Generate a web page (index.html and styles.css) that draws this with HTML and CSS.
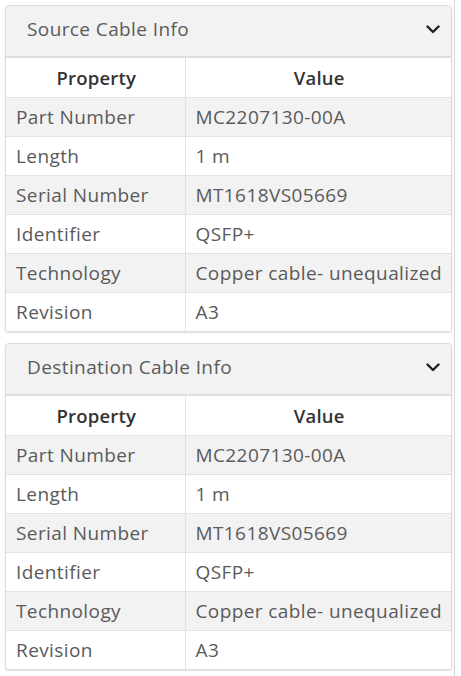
FILE: index.html
```html
<!DOCTYPE html>
<html>
<head>
<meta charset="utf-8">
<link rel="stylesheet" href="styles.css">
</head>
<body>
<div class="wrap">
  <section class="card">
    <div class="card-head">
      <span class="title">Source Cable Info</span>
      <svg class="chev" width="14" height="9" viewBox="0 0 14 9"><path d="M1.5 1.5 L7 7 L12.5 1.5" fill="none" stroke="#1f1f1f" stroke-width="2.4" stroke-linecap="round" stroke-linejoin="round"/></svg>
    </div>
    <table class="info">
      <thead><tr><th class="c1">Property</th><th>Value</th></tr></thead>
      <tbody>
        <tr><td>Part Number</td><td>MC2207130-00A</td></tr>
        <tr><td>Length</td><td>1 m</td></tr>
        <tr><td>Serial Number</td><td>MT1618VS05669</td></tr>
        <tr><td>Identifier</td><td>QSFP+</td></tr>
        <tr><td>Technology</td><td>Copper cable- unequalized</td></tr>
        <tr><td>Revision</td><td>A3</td></tr>
      </tbody>
    </table>
  </section>
  <section class="card">
    <div class="card-head">
      <span class="title">Destination Cable Info</span>
      <svg class="chev" width="14" height="9" viewBox="0 0 14 9"><path d="M1.5 1.5 L7 7 L12.5 1.5" fill="none" stroke="#1f1f1f" stroke-width="2.4" stroke-linecap="round" stroke-linejoin="round"/></svg>
    </div>
    <table class="info">
      <thead><tr><th class="c1">Property</th><th>Value</th></tr></thead>
      <tbody>
        <tr><td>Part Number</td><td>MC2207130-00A</td></tr>
        <tr><td>Length</td><td>1 m</td></tr>
        <tr><td>Serial Number</td><td>MT1618VS05669</td></tr>
        <tr><td>Identifier</td><td>QSFP+</td></tr>
        <tr><td>Technology</td><td>Copper cable- unequalized</td></tr>
        <tr><td>Revision</td><td>A3</td></tr>
      </tbody>
    </table>
  </section>
</div>
</body>
</html>
```
FILE: styles.css
```css
html, body {
  margin: 0;
  padding: 0;
  background: #ffffff;
}
body {
  font-family: "Open Sans", "Noto Sans", sans-serif;
  color: #5a5a5a;
}
.wrap {
  box-sizing: border-box;
  width: 455px;
  min-height: 676px;
  border-right: 1px solid #d4d4d4;
  padding: 5px 0 0 5px;
  display: flex;
  flex-direction: column;
  gap: 11px;
}
.card {
  width: 447px;
  box-sizing: border-box;
  border: 1px solid #dcdcdc;
  border-radius: 4px;
  box-shadow: 0 1px 2px rgba(0,0,0,0.14);
  overflow: hidden;
  background: #fff;
}
.card-head {
  box-sizing: border-box;
  height: 52px;
  background: #f2f2f2;
  border-bottom: 2px solid #dedede;
  display: flex;
  align-items: center;
  justify-content: space-between;
  padding: 0 11px 4px 21px;
}
.title {
  font-size: 19px;
  letter-spacing: 0.4px;
  color: #5a5a5a;
}
.chev {
  display: block;
  margin-top: 1px;
}
.info {
  width: 100%;
  border-collapse: collapse;
  table-layout: fixed;
  font-size: 19px;
  letter-spacing: 0.4px;
}
.info th, .info td {
  height: 39px;
  box-sizing: border-box;
  border: 1px solid #e2e2e2;
  padding: 0 8px 0 10px;
  text-align: left;
  white-space: nowrap;
}
.info tr > :first-child { border-left: none; }
.info tr > :last-child { border-right: none; }
.info tbody tr:last-child td { border-bottom: none; }
.info thead th {
  border-top: none;
  text-align: center;
  font-weight: 600;
  color: #333;
  background: #fff;
  font-size: 18.5px;
  letter-spacing: 0.2px;
}
.info .c1 { width: 179px; }
.info tbody tr:nth-child(odd) td { background: #f2f2f2; }
.info tbody tr:nth-child(even) td { background: #ffffff; }
```
